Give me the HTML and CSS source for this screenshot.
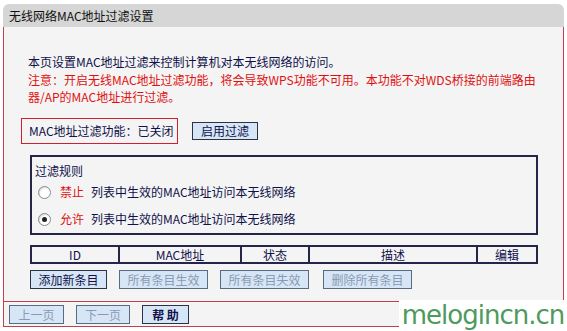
FILE: index.html
```html
<!DOCTYPE html>
<html>
<head>
<meta charset="utf-8">
<link rel="stylesheet" href="styles.css">
</head>
<body>
<div class="page">
  <div class="panel">
    <div class="header">无线网络MAC地址过滤设置</div>
    <div class="content">
      <div class="intro">
        <p class="info">本页设置MAC地址过滤来控制计算机对本无线网络的访问。</p>
        <p class="warn">注意：开启无线MAC地址过滤功能，将会导致WPS功能不可用。本功能不对WDS桥接的前端路由<br>器/AP的MAC地址进行过滤。</p>
      </div>
      <div class="status-row">
        <div class="status">MAC地址过滤功能：已关闭</div>
        <button class="btn btn-enable">启用过滤</button>
      </div>
      <div class="rules">
        <div class="rules-title">过滤规则</div>
        <div class="radio-row"><span class="radio"></span><span class="red">禁止</span><span class="desc">列表中生效的MAC地址访问本无线网络</span></div>
        <div class="radio-row second"><span class="radio checked"></span><span class="red">允许</span><span class="desc">列表中生效的MAC地址访问本无线网络</span></div>
      </div>
      <div class="list">
        <div class="cell">ID</div>
        <div class="cell">MAC地址</div>
        <div class="cell">状态</div>
        <div class="cell">描述</div>
        <div class="cell">编辑</div>
      </div>
      <div class="actions">
        <button class="btn w-add">添加新条目</button>
        <button class="btn disabled w-all">所有条目生效</button>
        <button class="btn disabled w-all">所有条目失效</button>
        <button class="btn disabled w-all">删除所有条目</button>
      </div>
    </div>
    <div class="footer">
      <button class="btn disabled w-prev">上一页</button>
      <button class="btn disabled w-next">下一页</button>
      <button class="btn w-help">帮 助</button>
    </div>
  </div>
  <div class="watermark">melogincn.cn</div>
</div>
</body>
</html>
```
FILE: styles.css
```css
* { box-sizing: border-box; }
html, body {
  margin: 0;
  padding: 0;
  background: #ffffff;
}
body {
  font-family: "Noto Sans CJK SC", "Liberation Sans", sans-serif;
  font-size: 12px;
  color: #10104a;
}
.page {
  position: relative;
  width: 567px;
  height: 331px;
  padding: 4px 0 0 3px;
  overflow: hidden;
}
.panel {
  width: 561px;
}
.header {
  height: 23px;
  line-height: 23px;
  background: #d6d6d6;
  border-radius: 6px 6px 0 0;
  padding-left: 6px;
  color: #111;
}
.content {
  background: #f4f4f4;
  border-left: 1px solid #c2404a;
  border-right: 1px solid #c2404a;
  padding: 26px 0 12px 17px;
}
.intro {
  padding-left: 7px;
}
.intro p { margin: 0; }
.info {
  line-height: 18px;
  color: #10104a;
}
.warn {
  line-height: 17px;
  color: #e01010;
}
.status-row {
  display: flex;
  align-items: center;
  margin-top: 13px;
}
.status {
  width: 157px;
  height: 26px;
  line-height: 24px;
  border: 1px solid #d02030;
  padding-left: 7px;
  color: #10104a;
}
.btn {
  font-family: "Noto Sans CJK SC", "Liberation Sans", sans-serif;
  font-size: 12px;
  height: 19px;
  line-height: 17px;
  padding: 0;
  margin: 0;
  background: #d6e6f6;
  border: 1px solid #2a3444;
  color: #10104a;
  text-align: center;
}
.btn.disabled {
  color: #8a9ab4;
  border-color: #5a6a80;
}
.btn-enable {
  width: 66px;
  height: 18px;
  line-height: 16px;
  margin-left: 14px;
}
.rules {
  margin: 11px 0 0 9px;
  width: 508px;
  border: 2px solid #25254a;
  padding: 5px 0 5px 3px;
}
.rules-title {
  line-height: 17px;
  color: #10104a;
}
.radio-row {
  display: flex;
  align-items: center;
  height: 18px;
  line-height: 18px;
  margin-top: 4px;
}
.radio-row.second { margin-top: 9px; }
.radio {
  width: 13px;
  height: 13px;
  border-radius: 50%;
  border: 1px solid #8a8a8a;
  background: #ffffff;
  margin-left: 3px;
  position: relative;
  box-shadow: inset 1px 1px 1px rgba(0,0,0,0.15);
}
.radio.checked::after {
  content: "";
  position: absolute;
  left: 3px;
  top: 3px;
  width: 5px;
  height: 5px;
  border-radius: 50%;
  background: #222;
}
.red {
  color: #e01010;
  margin-left: 9px;
}
.desc {
  margin-left: 7px;
  color: #10104a;
}
.list {
  display: grid;
  grid-template-columns: 86px 122px 68px 168px 1fr;
  width: 508px;
  margin: 10px 0 0 9px;
  border: 2px solid #25254a;
  height: 19px;
}
.cell {
  text-align: center;
  line-height: 15px;
  color: #10104a;
}
.cell + .cell {
  border-left: 2px solid #25254a;
}
.actions {
  display: flex;
  gap: 12px;
  margin: 6px 0 0 9px;
}
.w-add { width: 77px; }
.w-all { width: 89px; }
.actions .w-all:last-child { margin-left: 2px; }
.footer {
  border: 1px solid #c2404a;
  border-top: 1px solid #c2404a;
  background: #f4f4f4;
  height: 26px;
  display: flex;
  align-items: center;
  padding-left: 5px;
  gap: 12px;
}
.w-prev { width: 55px; }
.w-next { width: 54px; }
.w-help { width: 47px; font-weight: bold; }
.watermark {
  position: absolute;
  right: 0;
  bottom: 0;
  width: 168px;
  height: 31px;
  background: #ffffff;
  color: #4e9a5c;
  font-family: "DejaVu Sans", sans-serif;
  font-size: 26px;
  line-height: 31px;
  letter-spacing: -1px;
  text-align: center;
}
```
